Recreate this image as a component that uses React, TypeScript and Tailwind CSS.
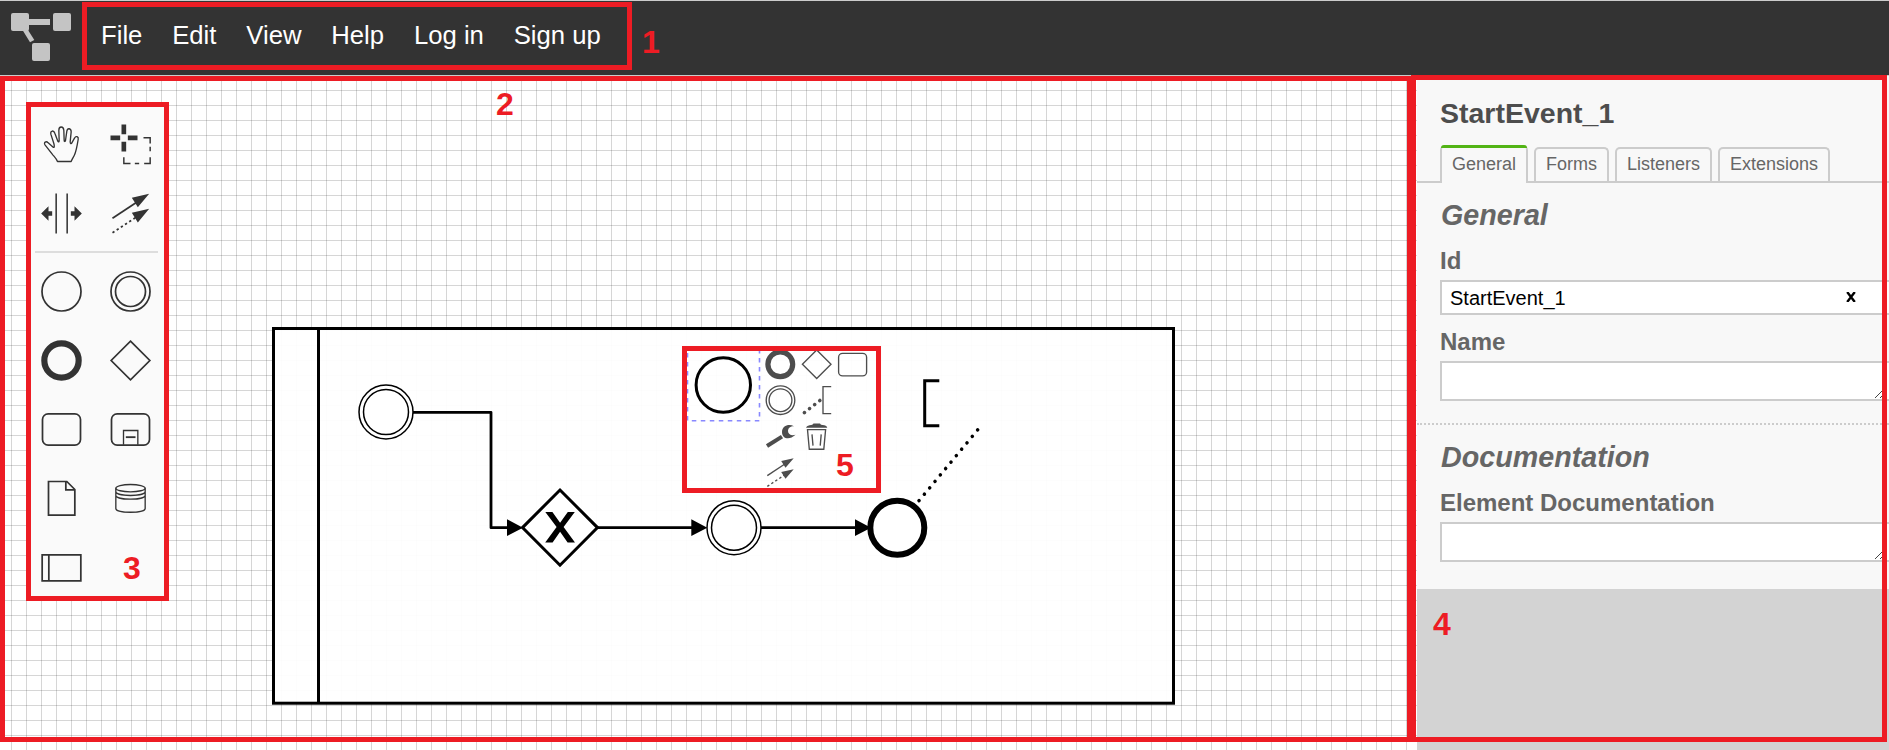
import React from "react";

const menu = ["File", "Edit", "View", "Help", "Log in", "Sign up"];
const tabs = ["Forms", "Listeners", "Extensions"];

function Cell({ children }: { children?: React.ReactNode }) {
  return (
    <svg
      className="size-[69px]"
      viewBox="-103.5 -103.5 207 207"
      fill="none"
      stroke="#333"
      strokeWidth="5.2"
    >
      {children}
    </svg>
  );
}

function Palette() {
  return (
    <div className="absolute left-[26px] top-[26px] h-[499px] w-[143px] border-5 border-[#ed1c24] bg-[#fafafa] pt-[3px]">
      <div className="-ml-1 grid w-[138px] grid-cols-2">
        <Cell>
          <path
            strokeWidth="4"
            strokeLinejoin="round"
            d="M-12 51 C-14 44 -20 38 -26 31 L-49 2 C-55 -6 -46 -12 -40 -5 L-25 8 C-21 11 -21 4 -23 -3 L-32 -31 C-34 -43 -23 -43 -20 -34 L-11 -10 C-9 -6 -7 -8 -7 -12 L-8 -42 C-8 -56 6 -56 7 -42 L8 -13 C8 -8 11 -8 12 -12 L16 -40 C18 -51 29 -49 29 -38 L26 -8 C26 -2 29 -1 31 -5 L39 -19 C43 -28 52 -23 50 -15 L47 2 C44 18 42 28 36 37 C32 43 31 46 29 51 Z"
          />
        </Cell>
        <Cell>
          <path stroke="none" fill="#333" d="M-27 -60h14v29h-14zM-27 -8h14v29h-14zM-60 -27h29v14h-29zM-8 -27h29v14h-29z" />
          <path strokeWidth="4.4" d="M39 -20H59V-3M59 7V20M59 38V57H41M26 57H13M0 57H-20V38" />
        </Cell>
        <Cell>
          <path strokeWidth="4.6" d="M-16 -60V60M17 -60V60" />
          <path stroke="none" fill="#333" d="M-61 0L-39 -22V-7H-28V7H-39V22ZM61 0L39 -22V-7H28V7H39V22Z" />
        </Cell>
        <Cell>
          <path d="M-54 14L22 -36" />
          <path strokeDasharray="7 8" d="M-54 58L22 8" />
          <path stroke="none" fill="#333" d="M56 -59L4 -47L22 -19ZM56 -14L4 -2L22 27Z" />
        </Cell>
      </div>
      <div className="ml-1 mt-[3px] h-0.5 w-[123px] bg-[#ddd]" />
      <div className="-ml-1 mt-[3.5px] grid w-[138px] grid-cols-2">
        <Cell><circle r="58.5" /></Cell>
        <Cell>
          <circle r="58.5" />
          <circle r="45" />
        </Cell>
        <Cell><circle r="51.5" strokeWidth="18.5" /></Cell>
        <Cell><path d="M0 -58L58 0L0 58L-58 0Z" /></Cell>
        <Cell><rect x="-57" y="-47" width="114" height="94" rx="17" /></Cell>
        <Cell>
          <rect x="-57" y="-47" width="114" height="94" rx="17" />
          <path strokeWidth="4" d="M-21 46V3H22V46" />
          <path strokeWidth="5.5" d="M-14 23H15" />
        </Cell>
        <Cell>
          <path d="M-39 -51H16L40 -27V50H-39ZM13 -51V-26H40" />
        </Cell>
        <Cell>
          <g strokeWidth="4">
            <ellipse cy="-31" rx="44" ry="11" />
            <path d="M-44 -31V30C-44 45 44 45 44 30V-31M-44 -21C-44 -5 44 -5 44 -21M-44 -10C-44 6 44 6 44 -10" />
          </g>
        </Cell>
        <Cell>
          <path d="M-58 -38H58V40H-58ZM-38 -38V40" />
        </Cell>
      </div>
    </div>
  );
}

function Diagram() {
  return (
    <svg className="absolute left-0 top-0 h-[674px] w-[1417px]" viewBox="0 76 1417 674" fill="none" stroke="#000" strokeWidth="3">
      <rect x="273.5" y="328.5" width="900" height="374.7" fill="#fff" fillOpacity="0.95" />
      <path d="M318.5 328V703" />
      <g fill="#fff" strokeWidth="1.5">
        <circle cx="386" cy="412" r="27" />
        <circle cx="386" cy="412" r="22.5" />
        <circle cx="734" cy="527.7" r="27" />
        <circle cx="734" cy="527.7" r="22.5" />
      </g>
      <path strokeWidth="2.8" strokeLinejoin="round" d="M413 412.3H491V527.7H510M598 527.7H694M761 527.7H858" />
      <path stroke="none" fill="#000" d="M507 519.3L523 527.7L507 536ZM691.3 519.3L707.3 527.7L691.3 536ZM855 519.3L871 527.7L855 536Z" />
      <path fill="#fff" d="M560 490L597.5 527.6L560 565.2L522.5 527.6Z" />
      <path stroke="none" fill="#000" d="M545.3 512H552.4L560.1 522.8L567.8 512H574.8L563.6 527L575 542.4H567.6L560.1 531.8L552.6 542.4H545.2L556.6 527Z" />
      <circle cx="897.3" cy="527.7" r="27" strokeWidth="6" fill="#fff" />
      <path d="M939.3 380.7H924.7V425.7H939.3" />
      <path strokeWidth="3.5" strokeLinecap="round" strokeDasharray="0.1 8.25" d="M919 500.7L978 429.5" />

      <rect x="687.5" y="349" width="72" height="71.8" stroke="#8888ff" strokeWidth="1.6" strokeDasharray="4.5 4.5" />
      <circle cx="723.3" cy="385" r="27.2" />
      <g stroke="#4d4d4d" strokeWidth="1.35">
        <circle cx="780.3" cy="364.3" r="12.4" strokeWidth="5.2" />
        <path d="M816.7 350L831 364.3L816.7 378.6L802.4 364.3Z" />
        <rect x="838.6" y="353.3" width="28" height="22.6" rx="4" />
        <circle cx="780.5" cy="400.2" r="14.3" />
        <circle cx="780.5" cy="400.2" r="11.4" />
        <path d="M831.2 386.6H823V413.6H831.2" />
        <path strokeWidth="3.6" strokeLinecap="round" strokeDasharray="0.1 6.4" d="M804.4 412.6L820 400.4" />
        <path strokeWidth="4" d="M767 446L782 436.6" />
        <path stroke="none" fill="#4d4d4d" d="M794 426.2C788.5 423.5 782 426 782 432C782 438.5 789 441 795.5 434.8C791.5 436 788 434.5 788 431C788 427.5 791 426 794 426.2Z" />
        <path d="M807.5 429.6H825.6L823.8 449.2H809.3ZM812 434.4L813 445.6M821.2 434.4L820.2 445.6" />
        <path stroke="none" fill="#4d4d4d" d="M806 427.8L807 426.3C808 425.5 811 425 812.3 424.8L813.5 423.4H820L821 424.8C823 425 826 425.5 826.5 426.3L827.3 427.8Z" />
        <path d="M767.3 475.6L786 463.2" />
        <path strokeDasharray="2.4 2.4" d="M767.3 486.4L786 474" />
        <path stroke="none" fill="#4d4d4d" d="M793.7 458.3L781.2 461L785.5 467.8ZM793.7 469.3L781.2 472L785.5 478.8Z" />
      </g>
    </svg>
  );
}

function Area() {
  return (
    <div className="relative mt-[5px] h-10 w-[460px] border-2 border-[#ccc] bg-white">
      <svg className="absolute left-[433px] top-[27px] size-2.5" viewBox="0 0 10 10" stroke="#444" strokeWidth="1">
        <path d="M0 8L8 0M5 8L9 4" />
      </svg>
    </div>
  );
}

function Properties() {
  return (
    <aside className="w-[472px] shrink-0 overflow-hidden bg-[#d3d3d3]">
      <div className="h-[513px] bg-[#f8f8f8] pt-[21px] text-[#666]">
        <h1 className="ml-[23px] text-[28.5px] font-bold leading-8 text-[#4d4d4d]">StartEvent_1</h1>
        <div className="mt-4 flex h-[38px] items-end text-lg leading-5">
          <div className="h-0.5 w-[23px] bg-[#ccc]" />
          <div className="relative h-[38px] w-[88px] rounded-t-[5px] border-x-2 border-[#ccc] px-2.5 pt-[9px]">
            General
            <div className="absolute -left-px -right-px top-0 h-[3px] rounded-t-[3px] bg-[#52b415]" />
          </div>
          <div className="flex h-9 flex-1 gap-1.5 border-b-2 border-[#ccc] pl-1.5">
            {tabs.map((t) => (
              <div key={t} className="h-[34px] rounded-t-[5px] border-x-2 border-t-2 border-[#ccc] px-2.5 pt-[5px]">
                {t}
              </div>
            ))}
          </div>
        </div>
        <div className="ml-[23px]">
          <h2 className="ml-px mt-4 text-[28.7px] font-bold italic leading-8">General</h2>
          <div className="mt-4 text-2xl font-bold leading-7">Id</div>
          <div className="mt-[5px] flex h-[35px] w-[460px] items-center justify-between border-2 border-[#ccc] bg-white pl-2 pr-[42px] text-xl leading-none text-black">
            <span>StartEvent_1</span>
            <svg className="-mt-0.5 size-2.5" viewBox="0 0 10 10" stroke="#000" strokeWidth="2.4">
              <path d="M1.2 0L8.8 10M8.8 0L1.2 10" />
            </svg>
          </div>
          <div className="mt-[13px] text-2xl font-bold leading-7">Name</div>
          <Area />
        </div>
        <div className="mt-[22px] w-[472px] border-t-2 border-dotted border-[#ccc]" />
        <div className="ml-[23px]">
          <h2 className="ml-px mt-4 text-[28.7px] font-bold italic leading-8">Documentation</h2>
          <div className="mt-4 text-2xl font-bold leading-7">Element Documentation</div>
          <Area />
        </div>
      </div>
    </aside>
  );
}

export default function App() {
  return (
    <div className="relative flex h-[750px] w-[1889px] flex-col overflow-hidden bg-white font-['Liberation_Sans',Arial,sans-serif]">
      <header className="flex h-[76px] shrink-0 items-start border-y border-[#ccc] bg-[#333]">
        <svg className="ml-[11px] mt-3 h-12 w-[60px]" viewBox="0 0 60 48" fill="#c4c4c4">
          <rect width="18" height="18" rx="2" />
          <rect x="42" width="18" height="18" rx="2" />
          <rect x="21" y="30" width="18" height="18" rx="2" />
          <path d="M18 6H39V12H18ZM11.5 17L19 29.3L23.3 27L17 17Z" />
        </svg>
        <nav className="ml-[30px] mt-[19px] flex gap-[29.8px] text-[25.7px] leading-[30px] text-white">
          {menu.map((m) => (
            <span key={m}>{m}</span>
          ))}
        </nav>
      </header>
      <div className="flex min-h-0 flex-1">
        <main className="relative w-[1417px] shrink-0 bg-[linear-gradient(to_right,rgba(0,0,0,0.16)_1px,transparent_1px),linear-gradient(to_bottom,rgba(0,0,0,0.16)_1px,transparent_1px)] bg-size-[15px_15px] bg-position-[11px_14px]">
          <Diagram />
          <Palette />
        </main>
        <Properties />
      </div>
      <div className="absolute left-0 top-[76px] h-[666px] w-[1412px] border-5 border-[#ed1c24]" />
      <div className="absolute left-[1411px] top-[75px] h-[667px] w-[476px] border-5 border-[#ed1c24]" />
      <div className="absolute left-[82px] top-[2px] h-[68px] w-[550px] border-5 border-[#ed1c24]" />
      <div className="absolute left-[682px] top-[346px] h-[147px] w-[199px] border-5 border-[#ed1c24]" />
      <div className="text-[32px] font-bold leading-9 text-[#ed1c24]">
        <span className="absolute left-[642px] top-[24px]">1</span>
        <span className="absolute left-[496px] top-[86px]">2</span>
        <span className="absolute left-[123px] top-[550px]">3</span>
        <span className="absolute left-[1433px] top-[606px]">4</span>
        <span className="absolute left-[836px] top-[447px]">5</span>
      </div>
    </div>
  );
}
